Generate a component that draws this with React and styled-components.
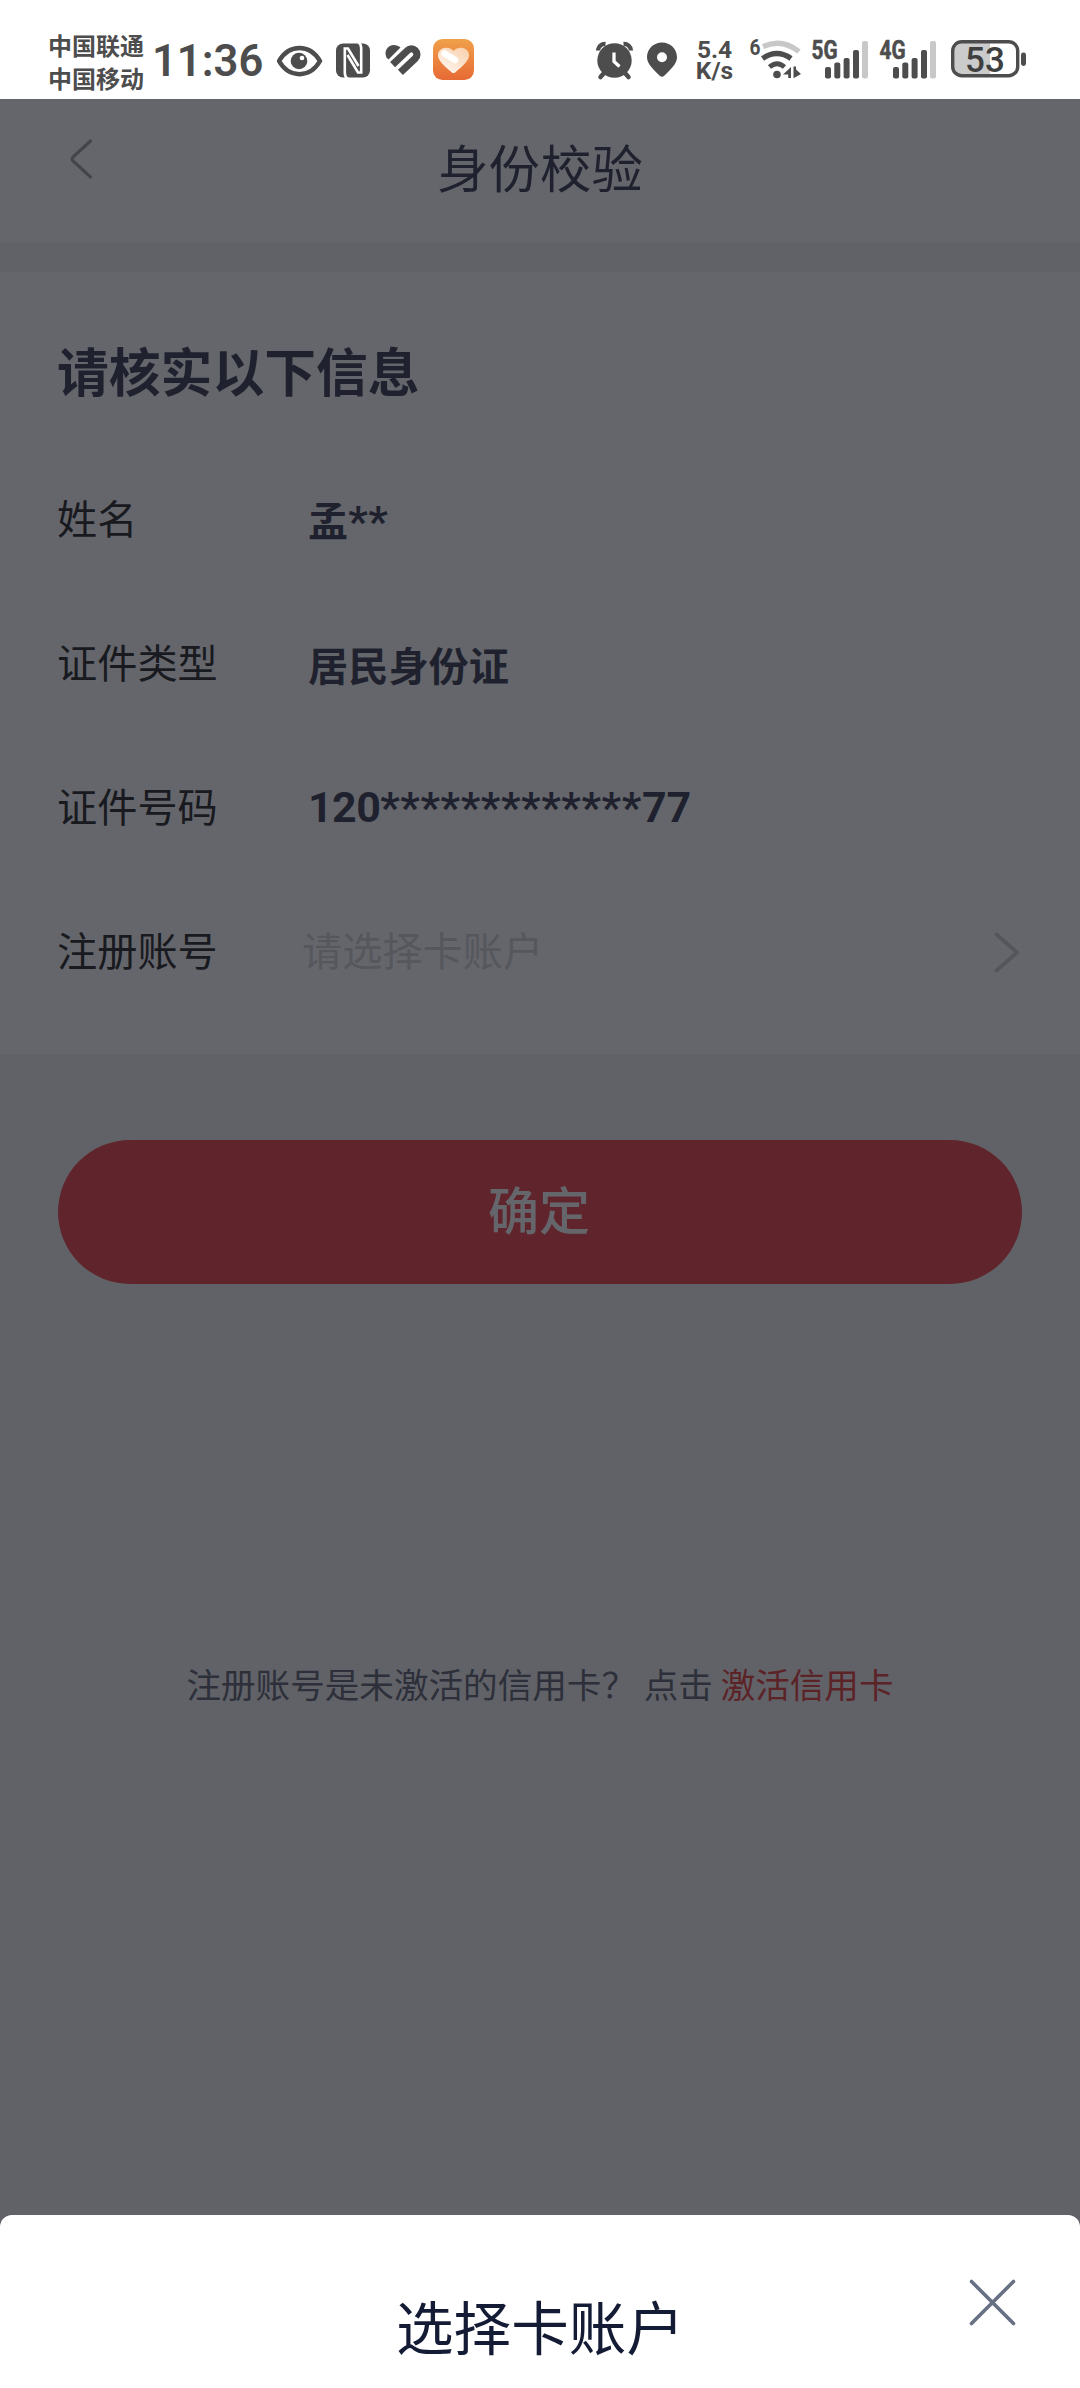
import styled, { createGlobalStyle } from "styled-components"


const GlobalStyle = createGlobalStyle`
    * {
        box-sizing: border-box;
    }

    body {
        margin: 0;
        background-color: #ffffff;
        font-family: "Noto Sans CJK SC", sans-serif;
    }
`;

const Screen = styled.div`
    position: relative;
    width: 1080px;
    height: 2388px;
    display: flex;
    flex-direction: column;
    overflow: hidden;
    background-color: #f0f0f1;
`;

const StatusBar = styled.header`
    width: 100%;
    height: 99px;
    padding: 20px 54px 0 48px;
    display: flex;
    justify-content: space-between;
    background-color: #ffffff;
    color: #4d4d4d;
`;

const StatusGroup = styled.div`
    height: 80px;
    display: flex;
    align-items: center;

    svg {
        display: block;
        flex: none;
    }
`;

const Carriers = styled.div`
    width: 104px;
    padding-top: 2px;
    font-size: 24px;
    font-weight: 700;
    line-height: 33px;
`;

const Clock = styled.div`
    width: 125px;
    padding-top: 3px;
    font-family: Roboto, sans-serif;
    font-size: 43.5px;
    font-weight: 600;
    line-height: 80px;
`;

const Speed = styled.div`
    width: 45px;
    margin-right: 10px;
    padding-top: 1px;
    font-family: Roboto, sans-serif;
    font-size: 24.5px;
    font-weight: 700;
    line-height: 20.5px;
    text-align: center;
`;

const TitleBar = styled.div`
    width: 100%;
    height: 144px;
    padding: 0 67px;
    display: grid;
    grid-template-columns: 30px 1fr 30px;
    background-color: #ffffff;
`;

const BackButton = styled.button`
    height: 120px;
    padding: 0;
    border: none;
    background: none;

    svg {
        display: block;
    }
`;

const PageTitle = styled.h1`
    margin: 0;
    color: #141b34;
    font-size: 51.4px;
    font-weight: 400;
    line-height: 134px;
    text-align: center;
`;

const InfoPanel = styled.section`
    width: 100%;
    margin-top: 29px;
    padding: 62px 59px 34px 57px;
    background-color: #ffffff;
`;

const PanelTitle = styled.h2`
    margin: 0 0 38px;
    color: #141b34;
    font-size: 51.8px;
    font-weight: 700;
    line-height: 72px;
`;

const Row = styled.div`
    height: 144px;
    padding-top: 2px;
    display: flex;
    align-items: center;
    font-size: 40.2px;
    line-height: 60px;
`;

const Label = styled.span`
    flex: 0 0 251px;
    color: #000000;
`;

const Value = styled.span`
    padding-top: ${(props) => (props.$numeric ? "1px" : "5px")};
    color: #141b34;
    font-weight: 700;
`;

const Digits = styled.span`
    font-family: Roboto, sans-serif;
    font-size: 43px;
    letter-spacing: ${(props) => props.$spacing || "0"};
`;

const Placeholder = styled.span`
    flex: 1;
    margin-left: -6px;
    color: #c8ccd0;
`;

const ConfirmButton = styled.button`
    width: 964px;
    height: 144px;
    margin: 86px auto 0;
    padding: 0 2px 8px 0;
    border: none;
    border-radius: 72px;
    background-color: #ed252c;
    color: #ffffff;
    font-family: inherit;
    font-size: 51px;
    font-weight: 500;
`;

const Hint = styled.p`
    margin: 374px 0 0;
    color: #434a5a;
    font-size: 34.6px;
    line-height: 50px;
    text-align: center;
    white-space: pre;
`;

const ActivateLink = styled.a`
    color: #e0201c;
`;

const Overlay = styled.div`
    position: absolute;
    top: 99px;
    right: 0;
    bottom: 0;
    left: 0;
    display: flex;
    flex-direction: column;
    justify-content: flex-end;
    background-color: rgba(36, 37, 44, 0.7);
`;

const Sheet = styled.div`
    width: 100%;
    height: 173px;
    padding: 0 63px;
    display: grid;
    grid-template-columns: 49px 1fr 49px;
    border-radius: 12px 12px 0 0;
    background-color: #ffffff;
`;

const SheetTitle = styled.h2`
    grid-column: 2;
    margin: 67px 0 0;
    color: #141b34;
    font-size: 57.6px;
    font-weight: 400;
    line-height: 86px;
    text-align: center;
`;

const CloseButton = styled.button`
    height: 49px;
    margin-top: 63px;
    padding: 0;
    border: none;
    background: none;

    svg {
        display: block;
    }
`;

function EyeIcon() {
    return (
        <svg width="59" height="80" viewBox="277 20 59 80">
            <path d="M279 61C289 43.500 310 43.500 320 61C310 78.500 289 78.500 279 61Z" fill="none" stroke="#4d4d4d" strokeWidth="4.500" strokeLinejoin="round" />
            <circle cx="299" cy="61" r="8.300" fill="#4d4d4d" />
            <circle cx="302" cy="58" r="2.300" fill="#fff" />
        </svg>
    )
}

function NfcIcon() {
    return (
        <svg width="49" height="80" viewBox="336 20 49 80">
            <rect x="336" y="43.500" width="34" height="34" rx="7" fill="#4d4d4d" />
            <path d="M348 79Q344.800 77 344.800 73V48.500H348L358.500 66" fill="none" stroke="#fff" strokeWidth="2.600" />
            <path d="M358 42Q361.200 44 361.200 48V72.500H358L347.500 55" fill="none" stroke="#fff" strokeWidth="2.600" />
        </svg>
    )
}

function HealthIcon() {
    return (
        <svg width="48" height="80" viewBox="385 20 48 80">
            <path d="M386.500 57.500C383.500 51 388 45 393.500 45C396.500 45 398.800 46.200 400.500 47.500L388.500 59.500Z" fill="#4d4d4d" />
            <path d="M392.600 64.600L407.500 50.500A5.500 5.500 0 0 1 415.300 58.300L400.400 72.400" fill="none" stroke="#4d4d4d" strokeWidth="7.200" />
        </svg>
    )
}

function HeartAppIcon() {
    return (
        <svg width="41" height="80" viewBox="433 20 41 80">
            <defs>
                <linearGradient id="appFill" x1="0" y1="0" x2="0" y2="1">
                    <stop offset="0" stopColor="#f0a049" />
                    <stop offset="1" stopColor="#e76a35" />
                </linearGradient>
                <linearGradient id="heartFill" x1="1" y1="0" x2="0.300" y2="1">
                    <stop offset="0" stopColor="#f8cfaa" />
                    <stop offset="1" stopColor="#fff4ec" />
                </linearGradient>
            </defs>
            <rect x="433" y="39" width="41" height="41" rx="9.500" fill="url(#appFill)" />
            <path d="M453.500 51C449 45.500 438 47 438 55.500C438 61.500 447 68 451.500 72.200Q453.500 74 455.500 72.200C460 68 469 61.500 469 55.500C469 47 458 45.500 453.500 51Z" fill="url(#heartFill)" />
            <path d="M444.500 53.500L455 60" stroke="#fff" strokeWidth="6.500" strokeLinecap="round" />
        </svg>
    )
}

function AlarmIcon() {
    return (
        <svg width="51" height="80" viewBox="596 20 51 80">
            <path d="M598 50.500A7 7 0 0 1 605.500 43.800M631 50.500A7 7 0 0 0 623.500 43.800" fill="none" stroke="#4d4d4d" strokeWidth="4.200" />
            <circle cx="614.500" cy="60.500" r="17.200" fill="#4d4d4d" />
            <path d="M604.500 72.500L600.500 77M624.500 72.500L628.500 77" stroke="#4d4d4d" strokeWidth="4.500" strokeLinecap="round" />
            <path d="M614 52.500V61.500L619.500 66.500" fill="none" stroke="#fff" strokeWidth="3.300" />
        </svg>
    )
}

function PinIcon() {
    return (
        <svg width="45" height="80" viewBox="647 20 45 80">
            <path fillRule="evenodd" d="M662 42.500C670.500 42.500 677 49 677 57.300C677 64.500 669 71 664.500 75.500Q662 78 659.500 75.500C655 71 647 64.500 647 57.300C647 49 653.500 42.500 662 42.500ZM662 52.300A5 5 0 1 0 662 62.300A5 5 0 1 0 662 52.300Z" fill="#4d4d4d" />
        </svg>
    )
}

function WifiIcon() {
    return (
        <svg width="65" height="80" viewBox="747 20 65 80">
            <text x="749.500" y="55" fill="#4d4d4d" fontFamily="Roboto, sans-serif" fontSize="22.500" fontWeight="700" textLength="11" lengthAdjust="spacingAndGlyphs">6</text>
            <path d="M763 46.500Q782 38 799 51.500" fill="none" stroke="#c8c8c8" strokeWidth="5.300" />
            <path d="M762.500 58.500Q777 48.500 791 58.500" fill="none" stroke="#4d4d4d" strokeWidth="5.300" />
            <path d="M769.500 67Q777 60.500 784.500 67" fill="none" stroke="#4d4d4d" strokeWidth="4.800" />
            <circle cx="777" cy="74.500" r="3.800" fill="#4d4d4d" />
            <path d="M791 67V78H788.200V74.500H783ZM793.500 66.500H796V69.500L801 74L793.500 78.200Z" fill="#4d4d4d" />
        </svg>
    )
}

function SignalIcon({ name, width }) {
    return (
        <svg width={width} height="80" viewBox={`0 20 ${width} 80`} overflow="visible">
            <text x="-0.500" y="59" fill="#4d4d4d" stroke="#4d4d4d" strokeWidth="0.600" fontFamily="Roboto, sans-serif" fontSize="25" fontWeight="700" textLength="26" lengthAdjust="spacingAndGlyphs">{name}</text>
            <rect x="13" y="67" width="6" height="11.500" rx="2" fill="#4d4d4d" />
            <rect x="22.300" y="62.500" width="6" height="16" rx="2" fill="#4d4d4d" />
            <rect x="31.600" y="58" width="6" height="20.500" rx="2" fill="#4d4d4d" />
            <rect x="41" y="50" width="6" height="28.500" rx="2" fill="#4d4d4d" />
            <rect x="50" y="41" width="6" height="37.500" rx="2" fill="#c8c8c8" />
        </svg>
    )
}

function BatteryIcon() {
    return (
        <svg width="75" height="80" viewBox="951 20 75 80">
            <path d="M962 42H990V76H962Q953 76 953 67V51Q953 42 962 42Z" fill="#cbcbcb" />
            <rect x="952.700" y="41.700" width="65" height="34" rx="9" fill="none" stroke="#4d4d4d" strokeWidth="3.400" />
            <rect x="1021" y="52.500" width="5" height="13.500" rx="2.400" fill="#4d4d4d" />
            <text x="985" y="71.800" fill="#3f3f3f" fontFamily="Roboto, sans-serif" fontSize="35" fontWeight="500" textAnchor="middle">53</text>
        </svg>
    )
}

export default function App() {

    return (
        <Screen>
            <GlobalStyle />
            <StatusBar>
                <StatusGroup>
                    <Carriers>
                        <div>中国联通</div>
                        <div>中国移动</div>
                    </Carriers>
                    <Clock>11:36</Clock>
                    <EyeIcon />
                    <NfcIcon />
                    <HealthIcon />
                    <HeartAppIcon />
                </StatusGroup>
                <StatusGroup>
                    <AlarmIcon />
                    <PinIcon />
                    <Speed>
                        <div>5.4</div>
                        <div>K/s</div>
                    </Speed>
                    <WifiIcon />
                    <SignalIcon name="5G" width={68} />
                    <SignalIcon name="4G" width={71} />
                    <BatteryIcon />
                </StatusGroup>
            </StatusBar>

            <TitleBar>
                <BackButton aria-label="返回">
                    <svg width="30" height="120" viewBox="67 99 30 120">
                        <path d="M90.500 141L73 157Q71.500 159 73 161L90.500 177" fill="none" stroke="#909296" strokeWidth="3.200" strokeLinecap="round" />
                    </svg>
                </BackButton>
                <PageTitle>身份校验</PageTitle>
            </TitleBar>

            <InfoPanel>
                <PanelTitle>请核实以下信息</PanelTitle>
                <Row>
                    <Label>姓名</Label>
                    <Value>孟<Digits $spacing="0.6px">**</Digits></Value>
                </Row>
                <Row>
                    <Label>证件类型</Label>
                    <Value>居民身份证</Value>
                </Row>
                <Row>
                    <Label>证件号码</Label>
                    <Value $numeric>
                        <Digits $spacing="-0.6px">120</Digits>
                        <Digits $spacing="0.6px">*************</Digits>
                        <Digits>77</Digits>
                    </Value>
                </Row>
                <Row>
                    <Label>注册账号</Label>
                    <Placeholder>请选择卡账户</Placeholder>
                    <svg width="28" height="48" viewBox="994 925 28 48">
                        <path d="M997.500 934.500L1018 952.500L997.500 970.500" fill="none" stroke="#c4c8cc" strokeWidth="3.800" strokeLinecap="round" strokeLinejoin="round" />
                    </svg>
                </Row>
            </InfoPanel>

            <ConfirmButton>确定</ConfirmButton>
            <Hint>注册账号是未激活的信用卡？ 点击 <ActivateLink>激活信用卡</ActivateLink></Hint>

            <Overlay>
                <Sheet>
                    <SheetTitle>选择卡账户</SheetTitle>
                    <CloseButton aria-label="关闭">
                        <svg width="49" height="49" viewBox="0 0 49 49">
                            <path d="M3.500 3.500L45.500 45.500M45.500 3.500L3.500 45.500" stroke="#687084" strokeWidth="3.600" strokeLinecap="round" />
                        </svg>
                    </CloseButton>
                </Sheet>
            </Overlay>
        </Screen>
    )
}
